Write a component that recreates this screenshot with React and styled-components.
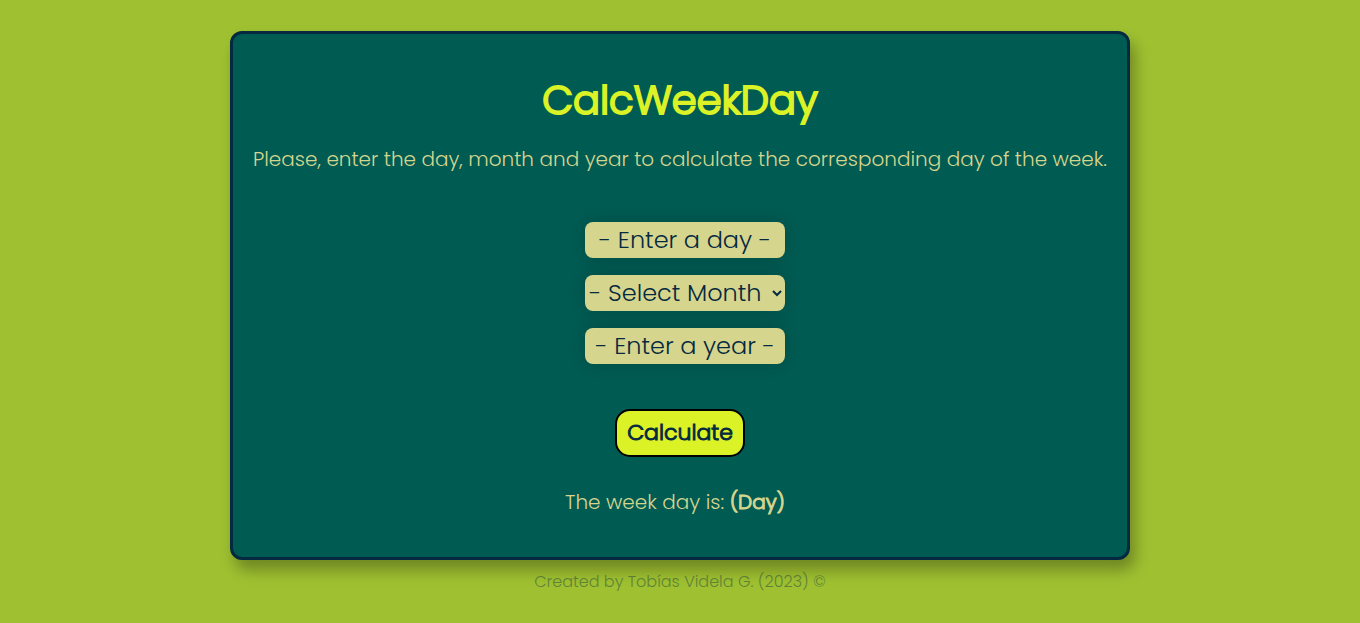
import React, { useState } from "react";
import styled, { createGlobalStyle, css } from "styled-components";

const GlobalStyle = createGlobalStyle`
  * {
    box-sizing: border-box;
  }
  body {
    margin: 0;
    background: #9fc131;
    color: #d6d58e;
    font-family: Poppins, Inter, "Open Sans", sans-serif;
    font-weight: 300;
  }
`;

const Page = styled.div`
  display: flex;
  flex-direction: column;
  align-items: center;
  padding: 31px 16px 24px;
`;

const Card = styled.main`
  display: flex;
  flex-direction: column;
  align-items: center;
  width: 100%;
  max-width: 900px;
  padding: 36px 16px 40px;
  border: 3px solid #042940;
  border-radius: 12px;
  background: #005c53;
  box-shadow: 5px 10px 15px rgba(0, 0, 0, 0.3);
  text-align: center;
`;

const Title = styled.h1`
  margin: 0;
  color: #dbf227;
  font-size: 40px;
  font-weight: 300;
  line-height: 60px;
  -webkit-text-stroke: 2px currentColor;
`;

const Intro = styled.p`
  margin: 14px 0 0;
  font-size: 20px;
  line-height: 30px;
`;

const Form = styled.form`
  display: flex;
  flex-direction: column;
  align-items: center;
  margin-top: 48px;
`;

const Fields = styled.div`
  display: flex;
  flex-direction: column;
  gap: 17px;
  padding-left: 10px;
`;

const fieldStyle = css`
  display: block;
  width: 200px;
  height: 36px;
  padding: 0 0 2px;
  border: none;
  border-radius: 8px;
  background: #d6d58e;
  box-shadow: 0 0 20px rgba(0, 0, 0, 0.2);
  color: #042940;
  font-family: inherit;
  font-size: 24px;
  font-weight: 300;
`;

const NumberField = styled.input`
  ${fieldStyle}
  text-align: center;

  &::placeholder {
    color: #042940;
    opacity: 1;
  }
`;

const MonthField = styled.select`
  ${fieldStyle}
  padding-right: 4px;
`;

const CalculateButton = styled.button`
  width: 130px;
  height: 48px;
  margin-top: 45px;
  padding: 0 0 2px;
  border: 2px solid #000;
  border-radius: 15px;
  background: #dbf227;
  color: #042940;
  font-family: inherit;
  font-size: 22px;
  font-weight: 300;
  -webkit-text-stroke: 1px currentColor;
  cursor: pointer;
`;

const Result = styled.p`
  margin: 30px 0 0;
  padding-right: 10px;
  font-size: 20px;
  line-height: 30px;

  strong {
    font-weight: 300;
    -webkit-text-stroke: 1px currentColor;
  }
`;

const Footer = styled.footer`
  margin-top: 10px;
  color: #042940;
  font-size: 16px;
  font-weight: 300;
  line-height: 24px;
  opacity: 0.4;
`;

const MONTHS = [
  "January", "February", "March", "April", "May", "June",
  "July", "August", "September", "October", "November", "December",
];

export default function App() {
  const [day, setDay] = useState("");
  const [month, setMonth] = useState("");
  const [year, setYear] = useState("");
  const [weekDay, setWeekDay] = useState("(Day)");

  const calculate = (event) => {
    event.preventDefault();
    if (!day || month === "" || !year) return;
    const date = new Date(Number(year), Number(month), Number(day));
    setWeekDay(date.toLocaleDateString("en-US", { weekday: "long" }));
  };

  return (
    <>
      <GlobalStyle />
      <Page>
        <Card>
          <Title>CalcWeekDay</Title>
          <Intro>
            Please, enter the day, month and year to calculate the corresponding day of the week.
          </Intro>
          <Form onSubmit={calculate}>
            <Fields>
              <NumberField
                aria-label="Day"
                inputMode="numeric"
                placeholder="- Enter a day -"
                value={day}
                onChange={(e) => setDay(e.target.value)}
              />
              <MonthField aria-label="Month" value={month} onChange={(e) => setMonth(e.target.value)}>
                <option value="">- Select Month -</option>
                {MONTHS.map((name, index) => (
                  <option key={name} value={index}>{name}</option>
                ))}
              </MonthField>
              <NumberField
                aria-label="Year"
                inputMode="numeric"
                placeholder="- Enter a year -"
                value={year}
                onChange={(e) => setYear(e.target.value)}
              />
            </Fields>
            <CalculateButton type="submit">Calculate</CalculateButton>
          </Form>
          <Result>
            The week day is: <strong>{weekDay}</strong>
          </Result>
        </Card>
        <Footer>Created by Tobías Videla G. (2023) ©</Footer>
      </Page>
    </>
  );
}
